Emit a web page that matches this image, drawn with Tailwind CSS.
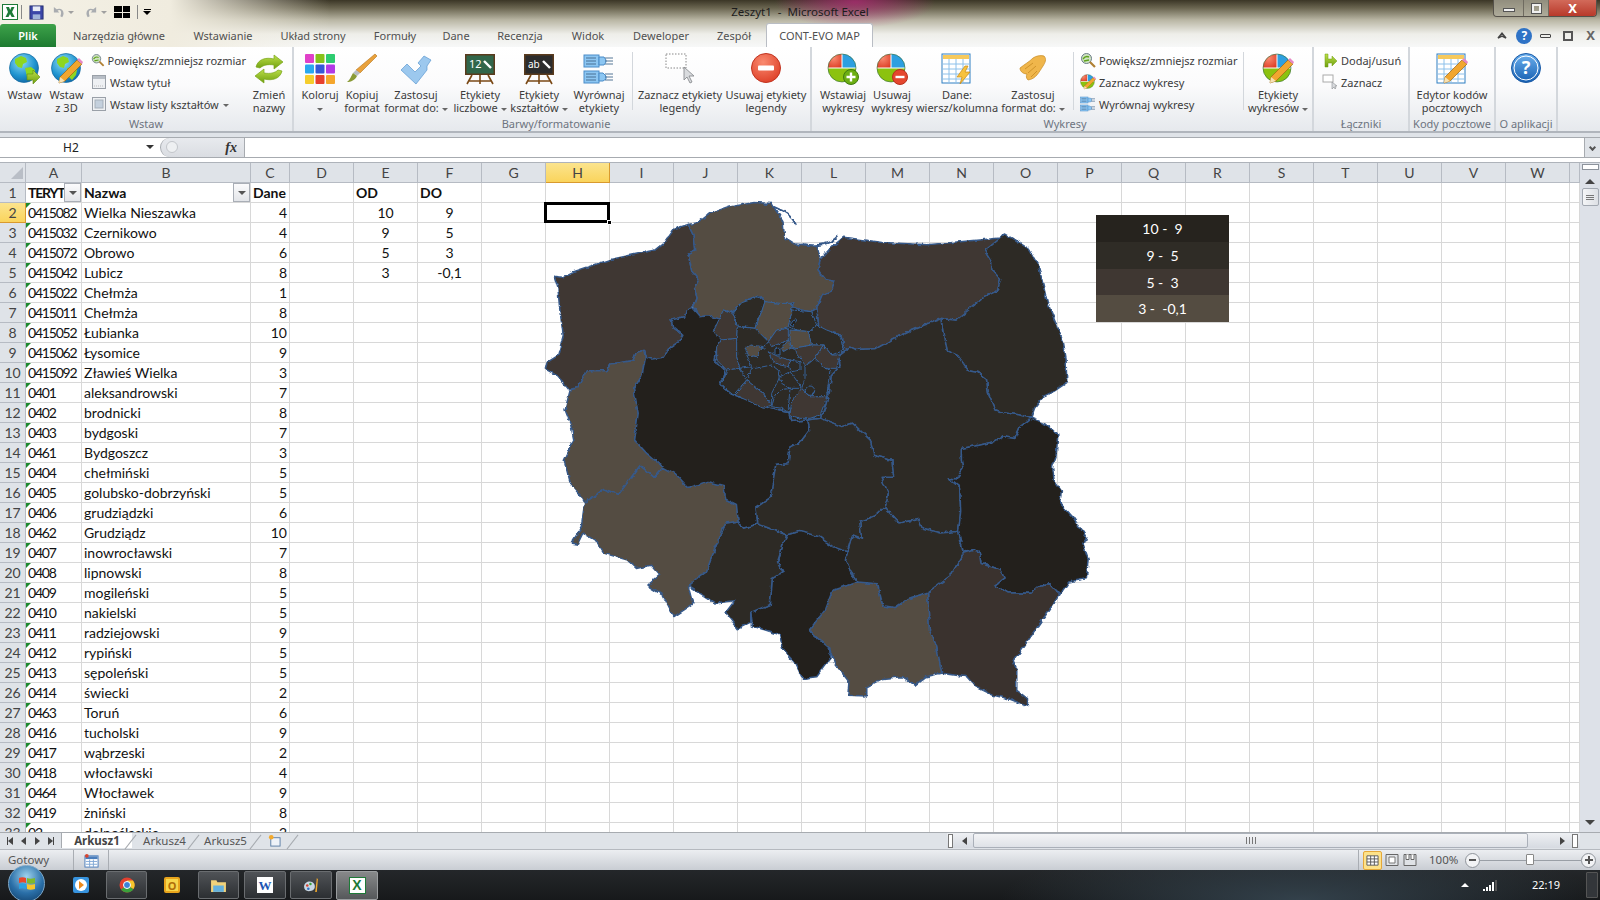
<!DOCTYPE html>
<html lang="pl">
<head>
    <meta charset="UTF-8">
    <title>Zeszyt1 - Microsoft Excel</title>
    <script src="https://cdn.jsdelivr.net/npm/@tailwindcss/browser@4"></script>
</head>
<body class="m-0 overflow-hidden bg-[#dfe3e8]">
<div class="relative flex h-[900px] w-[1600px] flex-col overflow-hidden font-['Noto_Sans',sans-serif] text-[11px] text-[#3c3c3c]">

    <!-- shared icon parts -->
    <svg class="absolute size-0" aria-hidden="true">
        <defs>
            <radialGradient id="gBlue" cx="0.4" cy="0.3" r="0.8"><stop offset="0" stop-color="#8fdcf5"/><stop offset="0.6" stop-color="#1f93cf"/><stop offset="1" stop-color="#0d5e9c"/></radialGradient>
            <radialGradient id="gRed" cx="0.4" cy="0.3" r="0.8"><stop offset="0" stop-color="#f98a70"/><stop offset="1" stop-color="#dc3a22"/></radialGradient>
            <linearGradient id="gArrow" x1="0" y1="0" x2="0" y2="1"><stop offset="0" stop-color="#bde04a"/><stop offset="1" stop-color="#6f9f0f"/></linearGradient>
            <linearGradient id="gHelp" x1="0" y1="0" x2="0" y2="1"><stop offset="0" stop-color="#6cb0ee"/><stop offset="1" stop-color="#165fb1"/></linearGradient>
            <symbol id="globe" viewBox="0 0 32 32"><circle cx="15" cy="15" r="14.5" fill="url(#gBlue)" stroke="#11689f" stroke-width="0.7"/><path d="M6 6l6-3 5 2 1 4-4 2-1 4-4-1-3-4zM16 15l6-1 4 3-1 5-4 5-3-3z" fill="#8ed620"/></symbol>
            <symbol id="pencil" viewBox="0 0 32 32"><path d="M8 30l1-6L26 7l5 4-17 17z" fill="#f1a62f" stroke="#9c6512" stroke-width="0.7"/><path d="M26 7l2-2 4 4-1 2z" fill="#e887c4"/><path d="M8 30l1-6 5 4z" fill="#f6e2b5"/></symbol>
            <symbol id="pie" viewBox="0 0 32 32"><path d="M15 15V1A14 14 0 0 0 1 15z" fill="url(#gRed)"/><path d="M15 15V1A14 14 0 0 1 29 15z" fill="#2d9fe0"/><path d="M1 15h28A14 14 0 0 1 1 15z" fill="#8cc20f"/><path d="M15 1v14M1 15h28" stroke="#fff" stroke-width="1"/><circle cx="15" cy="15" r="14" fill="none" stroke="#2b6a35" stroke-width="0.6"/></symbol>
            <symbol id="table" viewBox="0 0 32 32"><rect x="1" y="1" width="28" height="29" fill="#fff" stroke="#2e7fc2" stroke-width="1"/><rect x="2" y="2" width="26" height="4" fill="#f6c95c"/><path d="M2 11h26M2 16h26M2 21h26M2 26h26M8 6v24M15 6v24M22 6v24" stroke="#8cc0ea" stroke-width="1"/></symbol>
            <symbol id="zoomglass" viewBox="0 0 16 16"><circle cx="6.5" cy="6.5" r="5" fill="#cfe3c0" stroke="#6c7c89"/><path d="M3 7c2-3 4-3 6-2M4 9l5-1" stroke="#5ea31d" stroke-width="1.4" fill="none"/><path d="M10 10l5 5" stroke="#b08034" stroke-width="2.2"/></symbol>
            <symbol id="align" viewBox="0 0 32 32"><rect x="1" y="2" width="15" height="12" fill="#8cc6f2" stroke="#4a8cc8"/><path d="M16 4h5l2 3v2l-2 3h-5z" fill="#8cc6f2" stroke="#4a8cc8"/><rect x="1" y="18" width="15" height="12" fill="#8cc6f2" stroke="#4a8cc8"/><path d="M16 20h4l3 3v3l-3 2h-4z" fill="#8cc6f2" stroke="#4a8cc8"/><path d="M3 5h10M3 8h10M3 11h10M3 21h10M3 24h10M3 27h10M22 5h8M22 8h8M22 11h8M22 21h8M22 24h8M22 27h8" stroke="#42688a" stroke-width="0.9"/></symbol>
            <symbol id="easel" viewBox="0 0 32 32"><path d="M8 22L3 31M24 22l5 9M16 22v9M5 28h22" stroke="#7b4a17" stroke-width="1.6"/><rect x="1" y="1" width="30" height="21" fill="#5a3b1d"/></symbol>
        </defs>
    </svg>

    <!-- title bar and tabs share one glass background -->
    <div class="relative h-[47px] shrink-0 bg-[linear-gradient(90deg,#f4f1e6_0px,#f0ecdf_170px,rgba(240,236,223,0)_330px),radial-gradient(ellipse_80px_26px_at_855px_2px,rgba(180,40,120,0.75),rgba(180,40,120,0)),linear-gradient(180deg,#3b3626_0px,#6a6550_8px,#b9b6a4_20px,#eeeee9_34px,#f7f8f8_47px)]">
        <div class="flex h-[24px] items-center">
            <svg class="ml-[2px] size-[16px]" viewBox="0 0 16 16"><rect x="0.5" y="0.5" width="15" height="15" fill="#fff" stroke="#1d7a37"/><path d="M4 3h3l1.200 3L9.500 3h3L10 8l2.700 5h-3L8 10l-1.500 3h-3L6 8z" fill="#1d7a37"/></svg>
            <span class="ml-[3px] h-[14px] w-px bg-[#888]"></span>
            <svg class="ml-[7px] size-[15px]" viewBox="0 0 16 16"><rect x="1" y="1" width="14" height="14" fill="#3b46a8" stroke="#26306f"/><rect x="4" y="1.500" width="8" height="5" fill="#e8ecf5"/><rect x="4" y="10" width="8" height="5" fill="#9fb3d9"/></svg>
            <svg class="ml-[8px] size-[13px]" viewBox="0 0 14 14"><path d="M2 1v6h6L6 5c3-2 5 1 3 6l2 1c4-6-1-11-6-8.500L2 1z" fill="#a9acb0"/></svg>
            <span class="ml-[3px] border-x-[3px] border-t-[3px] border-x-transparent border-t-[#a0a0a0]"></span>
            <svg class="ml-[11px] size-[13px]" viewBox="0 0 14 14"><path d="M12 1v6H6l2-2c-3-2-5 1-3 6l-2 1C-1 6 4 1 9 3.500L12 1z" fill="#a9acb0"/></svg>
            <span class="ml-[3px] border-x-[3px] border-t-[3px] border-x-transparent border-t-[#a0a0a0]"></span>
            <span class="ml-[7px] grid h-[12px] w-[16px] grid-cols-2 gap-[1px]"><i class="bg-black"></i><i class="bg-black"></i><i class="bg-black"></i><i class="bg-black"></i></span>
            <span class="ml-[7px] h-[14px] w-px bg-[#888]"></span>
            <span class="ml-[5px] flex flex-col items-center gap-[1px]"><i class="h-px w-[7px] bg-black"></i><i class="border-x-[4px] border-t-[4px] border-x-transparent border-t-black"></i></span>
            <span class="absolute left-[0px] top-[4px] w-[1600px] text-center text-[11.5px] leading-[16px] text-[#1c1c1c]">Zeszyt1&nbsp; -&nbsp; Microsoft Excel</span>
            <!-- window buttons -->
            <div class="absolute right-[3px] top-0 flex h-[17px] overflow-hidden rounded-b-[4px] border border-t-0 border-[#55514a]">
                <span class="flex w-[30px] items-center justify-center border-r border-[#6f6b60] bg-[#b7b3a4]/70"><i class="mt-[3px] h-[4px] w-[12px] border border-[#555] bg-[#f0f0f0]"></i></span>
                <span class="flex w-[25px] items-center justify-center border-r border-[#6f6b60] bg-[#b7b3a4]/70"><i class="size-[9px] border-2 border-[#f0f0f0] outline outline-[#555]"></i></span>
                <span class="flex w-[47px] items-center justify-center bg-[linear-gradient(180deg,#d26a5a,#b8392a)] text-[13px] font-bold leading-none text-white">X</span>
            </div>
        </div>
        <div class="flex h-[23px] items-end text-[#505050] [&>span]:pt-[2px]">
            <span class="flex h-[23px] w-[56px] items-center justify-center rounded-t-[3px] bg-[linear-gradient(180deg,#3da24a,#1d7a30)] font-semibold text-[#fff]">Plik</span>
            <span class="flex h-[23px] w-[126px] items-center justify-center">Narzędzia główne</span>
            <span class="flex h-[23px] w-[82px] items-center justify-center">Wstawianie</span>
            <span class="flex h-[23px] w-[98px] items-center justify-center">Układ strony</span>
            <span class="flex h-[23px] w-[66px] items-center justify-center">Formuły</span>
            <span class="flex h-[23px] w-[56px] items-center justify-center">Dane</span>
            <span class="flex h-[23px] w-[72px] items-center justify-center">Recenzja</span>
            <span class="flex h-[23px] w-[64px] items-center justify-center">Widok</span>
            <span class="flex h-[23px] w-[82px] items-center justify-center">Deweloper</span>
            <span class="flex h-[23px] w-[64px] items-center justify-center">Zespół</span>
            <span class="flex h-[24px] w-[107px] items-center justify-center rounded-t-[3px] border border-b-0 border-[#b9bdc4] bg-white">CONT-EVO MAP</span>
            <div class="ml-auto flex h-[23px] items-center">
                <svg class="mr-[9px] size-[10px]" viewBox="0 0 10 10"><path d="M1 7l4-5 4 5-4-2z" fill="none" stroke="#444" stroke-width="1.400"/></svg>
                <span class="mr-[8px] flex size-[16px] items-center justify-center rounded-full bg-[#2f73c6] text-[12px] font-bold leading-none text-white">?</span>
                <i class="mr-[12px] h-[4px] w-[11px] rounded-[1px] border border-[#444]"></i>
                <i class="mr-[13px] size-[10px] border-2 border-[#555]"></i>
                <span class="mr-[5px] text-[13px] font-bold leading-none text-[#666]">X</span>
            </div>
        </div>
    </div>

    <!-- ribbon -->
    <div class="flex h-[86px] shrink-0 border-b-2 border-[#b0b5bc] bg-[linear-gradient(180deg,#ffffff_0%,#fbfbfc_45%,#e6e9ed_100%)] leading-[13px]">

        <div class="flex w-[294px] flex-col border-r-2 border-[#d3d7dc]">
            <div class="flex h-[71px] pl-px">
                <div class="flex w-[47px] flex-col items-center">
                    <svg class="mt-[6px] h-[32px] w-[32px]" viewBox="0 0 32 32"><use href="#globe"/><path d="M18 21h6v-4l7 7-7 7v-4h-6z" fill="url(#gArrow)" stroke="#5f8c12" stroke-width="0.6"/></svg>
                    <span class="mt-[3px] text-center">Wstaw</span>
                </div>
                <div class="flex w-[37px] flex-col items-center">
                    <svg class="mt-[6px] h-[32px] w-[32px]" viewBox="0 0 32 32"><use href="#globe"/><use href="#pencil" x="0" y="0"/></svg>
                    <span class="mt-[3px] text-center">Wstaw<br>z 3D</span>
                </div>
                <div class="flex w-[161px] flex-col gap-[6px] whitespace-nowrap pl-[6px] pt-[5px]">
                    <div class="flex h-[16px] items-center gap-[3px]"><svg class="size-[16px]" viewBox="0 0 16 16"><use href="#zoomglass"/></svg><span>Powiększ/zmniejsz rozmiar</span></div>
                    <div class="flex h-[16px] items-center gap-[3px]"><svg class="size-[16px]" viewBox="0 0 16 16"><rect x="1.500" y="1.500" width="13" height="13" fill="#eef0f3" stroke="#9aa0a8"/><rect x="2" y="2" width="12" height="3" fill="#b8bec6"/><path d="M3 12h10" stroke="#bbb" stroke-dasharray="1 1"/></svg><span>Wstaw tytuł</span></div>
                    <div class="flex h-[16px] items-center gap-[3px]"><svg class="size-[16px]" viewBox="0 0 16 16"><rect x="1.500" y="1.500" width="13" height="13" fill="#eef0f3" stroke="#9aa0a8"/><rect x="4" y="4" width="8" height="8" fill="#c4d0dd" stroke="#a5afba"/></svg><span>Wstaw listy kształtów<i class="ml-[4px] inline-block border-x-[3px] border-t-[3px] border-x-transparent border-t-[#666] align-middle"></i></span></div>
                </div>
                <div class="flex w-[46px] flex-col items-center">
                    <svg class="mt-[6px] h-[32px] w-[32px]" viewBox="0 0 32 32"><path d="M3 14c2-8 10-10 18-8V2l9 7-9 7v-4c-6-1-11 0-14 3z" fill="url(#gArrow)" stroke="#78a51a" stroke-width="0.7"/><path d="M29 18c-2 8-10 10-18 8v4l-9-7 9-7v4c6 1 11 0 14-3z" fill="url(#gArrow)" stroke="#78a51a" stroke-width="0.7"/></svg>
                    <span class="mt-[3px] text-center">Zmień<br>nazwy</span>
                </div>
            </div>
            <div class="text-center leading-[14px] text-[#6d7480]">Wstaw</div>
        </div>

        <div class="flex w-[518px] flex-col border-r-2 border-[#d3d7dc]">
            <div class="flex h-[71px] pl-[4px]">
                <div class="flex w-[44px] flex-col items-center">
                    <svg class="mt-[6px] h-[32px] w-[32px]" viewBox="0 0 32 32"><rect x="1" y="1" width="9" height="9" rx="1" fill="#e040c8"/><rect x="11.500" y="1" width="9" height="9" rx="1" fill="#86c21a"/><rect x="22" y="1" width="9" height="9" rx="1" fill="#2dcc70"/><rect x="1" y="11.500" width="9" height="9" rx="1" fill="#29a8ef"/><rect x="11.500" y="11.500" width="9" height="9" rx="1" fill="#3558d8"/><rect x="22" y="11.500" width="9" height="9" rx="1" fill="#b23ae6"/><rect x="1" y="22" width="9" height="9" rx="1" fill="#f5cd2c"/><rect x="11.500" y="22" width="9" height="9" rx="1" fill="#e8402e"/><rect x="22" y="22" width="9" height="9" rx="1" fill="#f5a62c"/></svg>
                    <span class="mt-[3px] text-center">Koloruj<br><i class="inline-block border-x-[3px] border-t-[3px] border-x-transparent border-t-[#666] align-middle"></i></span>
                </div>
                <div class="flex w-[40px] flex-col items-center">
                    <svg class="mt-[6px] h-[32px] w-[32px]" viewBox="0 0 32 32"><path d="M29 1l2 2-17 17-4-3z" fill="#e9a13b" stroke="#b3741c" stroke-width="0.6"/><path d="M10 17l4 3-3 3-4-3z" fill="#b7bcc2"/><path d="M7 20l4 3c-2 4-6 6-10 6 3-2 4-6 6-9z" fill="#8a9a36"/></svg>
                    <span class="mt-[3px] text-center">Kopiuj<br>format</span>
                </div>
                <div class="flex w-[68px] flex-col items-center">
                    <svg class="mt-[6px] h-[32px] w-[32px]" viewBox="0 0 32 32"><path d="M1 17l6-6 8 8L21 13l-3-3 6-7 7 4-4 6 0 4-11 14z" fill="#9cc8ee" stroke="#5d9ad1" stroke-width="0.7"/></svg>
                    <span class="mt-[3px] whitespace-nowrap text-center">Zastosuj<br>format do:<i class="ml-[3px] inline-block border-x-[3px] border-t-[3px] border-x-transparent border-t-[#666] align-middle"></i></span>
                </div>
                <div class="flex w-[60px] flex-col items-center">
                    <svg class="mt-[6px] h-[32px] w-[32px]" viewBox="0 0 32 32"><use href="#easel"/><rect x="2.500" y="2.500" width="27" height="18" fill="#31664a"/><text x="5" y="15" font-size="11" font-family="Noto Sans, sans-serif" fill="#fff">12</text><path d="M20 8l7 7" stroke="#fff" stroke-width="2.400"/></svg>
                    <span class="mt-[3px] whitespace-nowrap text-center">Etykiety<br>liczbowe<i class="ml-[3px] inline-block border-x-[3px] border-t-[3px] border-x-transparent border-t-[#666] align-middle"></i></span>
                </div>
                <div class="flex w-[58px] flex-col items-center">
                    <svg class="mt-[6px] h-[32px] w-[32px]" viewBox="0 0 32 32"><use href="#easel"/><rect x="2.500" y="2.500" width="27" height="18" fill="#2c2c2c"/><text x="5" y="15" font-size="10" font-family="Noto Sans, sans-serif" fill="#fff">ab</text><path d="M20 8l7 7" stroke="#fff" stroke-width="2.400"/></svg>
                    <span class="mt-[3px] whitespace-nowrap text-center">Etykiety<br>kształtów<i class="ml-[3px] inline-block border-x-[3px] border-t-[3px] border-x-transparent border-t-[#666] align-middle"></i></span>
                </div>
                <div class="flex w-[62px] flex-col items-center">
                    <svg class="mt-[6px] h-[32px] w-[32px]" viewBox="0 0 32 32"><use href="#align"/></svg>
                    <span class="mt-[3px] text-center">Wyrównaj<br>etykiety</span>
                </div>
                <div class="mx-[2px] mt-[5px] h-[58px] w-px bg-[#d3d7dc]"></div>
                <div class="flex w-[90px] flex-col items-center">
                    <svg class="mt-[6px] h-[32px] w-[32px]" viewBox="0 0 32 32"><rect x="2" y="1" width="20" height="14" fill="#fff" stroke="#888" stroke-dasharray="1.500 1.500"/><path d="M20 14v13l3-3 3 6 2-1-3-6h5z" fill="#d9dbde" stroke="#8a8d91" stroke-width="0.9"/></svg>
                    <span class="mt-[3px] whitespace-nowrap text-center">Zaznacz etykiety<br>legendy</span>
                </div>
                <div class="flex w-[82px] flex-col items-center">
                    <svg class="mt-[6px] h-[32px] w-[32px]" viewBox="0 0 32 32"><circle cx="16" cy="15" r="14.500" fill="url(#gRed)" stroke="#c13421"/><rect x="8" y="12.500" width="16" height="5" rx="1" fill="#fff"/></svg>
                    <span class="mt-[3px] whitespace-nowrap text-center">Usuwaj etykiety<br>legendy</span>
                </div>
            </div>
            <div class="pl-[8px] text-center leading-[14px] text-[#6d7480]">Barwy/formatowanie</div>
        </div>

        <div class="flex w-[502px] flex-col border-r-2 border-[#d3d7dc]">
            <div class="flex h-[71px] pl-[4px]">
                <div class="flex w-[54px] flex-col items-center">
                    <svg class="mt-[6px] h-[32px] w-[32px]" viewBox="0 0 32 32"><use href="#pie"/><circle cx="24" cy="24" r="7.500" fill="#6cae12" stroke="#3f7a10"/><path d="M24 19.500v9M19.500 24h9" stroke="#fff" stroke-width="2.400"/></svg>
                    <span class="mt-[3px] text-center">Wstawiaj<br>wykresy</span>
                </div>
                <div class="flex w-[44px] flex-col items-center">
                    <svg class="mt-[6px] h-[32px] w-[32px]" viewBox="0 0 32 32"><use href="#pie"/><circle cx="24" cy="24" r="7.500" fill="#e5472f" stroke="#b7301d"/><path d="M19.500 24h9" stroke="#fff" stroke-width="2.400"/></svg>
                    <span class="mt-[3px] text-center">Usuwaj<br>wykresy</span>
                </div>
                <div class="flex w-[86px] flex-col items-center">
                    <svg class="mt-[6px] h-[32px] w-[32px]" viewBox="0 0 32 32"><use href="#table"/><path d="M24 13l-8 11h5l-2 7 10-12h-5l3-6z" fill="#f7c23e" stroke="#c98a13" stroke-width="0.7"/></svg>
                    <span class="mt-[3px] whitespace-nowrap text-center">Dane:<br>wiersz/kolumna</span>
                </div>
                <div class="flex w-[66px] flex-col items-center">
                    <svg class="mt-[6px] h-[32px] w-[32px]" viewBox="0 0 32 32"><path d="M3 15c5-4 9-6 13-10 3-2 7-3 11-2 3 3 1 7-1 10-4 6-7 13-15 14-2-2-2-4-1-6-3 0-7-2-7-6z" fill="#f0b64b" stroke="#c68a22" stroke-width="0.7"/><path d="M8 16l8-6M11 20l8-7M14 24l6-6" stroke="#c68a22" stroke-width="0.8"/></svg>
                    <span class="mt-[3px] whitespace-nowrap text-center">Zastosuj<br>format do:<i class="ml-[3px] inline-block border-x-[3px] border-t-[3px] border-x-transparent border-t-[#666] align-middle"></i></span>
                </div>
                <div class="ml-[7px] mr-[6px] mt-[5px] h-[58px] w-px bg-[#d3d7dc]"></div>
                <div class="flex w-[163px] flex-col gap-[6px] whitespace-nowrap pt-[5px]">
                    <div class="flex h-[16px] items-center gap-[3px]"><svg class="size-[16px]" viewBox="0 0 16 16"><use href="#zoomglass"/></svg><span>Powiększ/zmniejsz rozmiar</span></div>
                    <div class="flex h-[16px] items-center gap-[3px]"><svg class="size-[16px]" viewBox="0 0 32 32"><use href="#pie"/><use href="#pencil"/></svg><span>Zaznacz wykresy</span></div>
                    <div class="flex h-[16px] items-center gap-[3px]"><svg class="size-[16px]" viewBox="0 0 32 32"><use href="#align"/></svg><span>Wyrównaj wykresy</span></div>
                </div>
                <div class="mt-[5px] h-[58px] w-px bg-[#d3d7dc]"></div>
                <div class="flex w-[68px] flex-col items-center">
                    <svg class="mt-[6px] h-[32px] w-[32px]" viewBox="0 0 32 32"><use href="#pie"/><use href="#pencil"/></svg>
                    <span class="mt-[3px] whitespace-nowrap text-center">Etykiety<br>wykresów<i class="ml-[3px] inline-block border-x-[3px] border-t-[3px] border-x-transparent border-t-[#666] align-middle"></i></span>
                </div>
            </div>
            <div class="pl-[6px] text-center leading-[14px] text-[#6d7480]">Wykresy</div>
        </div>

        <div class="flex w-[96px] flex-col border-r-2 border-[#d3d7dc]">
            <div class="flex h-[71px] flex-col gap-[6px] pl-[8px] pt-[5px]">
                <div class="flex h-[16px] items-center gap-[3px]"><svg class="size-[16px]" viewBox="0 0 16 16"><path d="M3 2h3v5h4V4l5 5-5 5v-3H6v4H3z" fill="url(#gArrow)" stroke="#6f9f0f" stroke-width="0.500"/></svg><span>Dodaj/usuń</span></div>
                <div class="flex h-[16px] items-center gap-[3px]"><svg class="size-[16px]" viewBox="0 0 16 16"><rect x="1" y="1" width="10" height="7" fill="#fff" stroke="#aaa"/><path d="M10 8v7l2-2 1 2 1-1-1-2h2z" fill="#d9dbde" stroke="#8a8d91" stroke-width="0.600"/></svg><span>Zaznacz</span></div>
            </div>
            <div class="text-center leading-[14px] text-[#6d7480]">Łączniki</div>
        </div>

        <div class="flex w-[86px] flex-col border-r-2 border-[#d3d7dc]">
            <div class="flex h-[71px] flex-col items-center">
                <svg class="mt-[6px] h-[32px] w-[32px]" viewBox="0 0 32 32"><use href="#table"/><use href="#pencil"/></svg>
                <span class="mt-[3px] whitespace-nowrap text-center">Edytor kodów<br>pocztowych</span>
            </div>
            <div class="whitespace-nowrap text-center leading-[14px] text-[#6d7480]">Kody pocztowe</div>
        </div>

        <div class="flex w-[62px] flex-col border-r-2 border-[#d3d7dc]">
            <div class="flex h-[71px] flex-col items-center">
                <svg class="mt-[6px] h-[32px] w-[32px]" viewBox="0 0 32 32"><circle cx="16" cy="15" r="14.500" fill="url(#gHelp)" stroke="#1a5aa6"/><circle cx="16" cy="15" r="12" fill="none" stroke="#fff" stroke-width="1"/><text x="16" y="21" font-size="18" font-weight="700" font-family="Noto Sans, sans-serif" fill="#fff" text-anchor="middle">?</text></svg>
            </div>
            <div class="whitespace-nowrap text-center leading-[14px] text-[#6d7480]">O aplikacji</div>
        </div>
    </div>

    <!-- formula bar -->
    <div class="mt-[4px] flex h-[21px] shrink-0 items-stretch border-y border-[#a7abb0] bg-white text-[12px] text-[#222]">
        <div class="relative flex w-[160px] items-center justify-center pr-[18px] pt-px">H2<i class="absolute right-[6px] top-[7px] border-x-[4px] border-t-[4px] border-x-transparent border-t-[#333]"></i></div>
        <div class="relative flex w-[85px] items-center justify-end rounded-l-[10px] border-l border-r border-[#a7abb0] bg-[linear-gradient(180deg,#e8eaee,#dadde2)] pr-[7px]"><span class="absolute left-[5px] top-[3px] size-[12px] rounded-full border border-[#c3c6cb] bg-[#eef0f2]"></span><span class="font-['Liberation_Serif',serif] text-[14px] font-bold italic leading-none text-[#333]">fx</span></div>
        <div class="flex-1"></div>
        <div class="flex w-[16px] items-center justify-center border-l border-[#a7abb0] bg-[#dfe3e8]"><i class="size-[5px] rotate-45 border-b-2 border-r-2 border-[#555]"></i></div>
    </div>
    <div class="h-[5px] shrink-0 border-b border-[#aeb3ba] bg-white"></div>

    <!-- sheet -->
    <div class="flex h-[669px] shrink-0">
        <div id="sheet" class="relative w-[1580px] overflow-hidden bg-white font-['Lato',sans-serif] text-[14px] text-[#111]">
            <div id="cells"></div>

            <!-- selection of H2 -->
            <div class="absolute left-[544px] top-[39px] h-[21px] w-[66px] border-[3px] border-black"></div>
            <div class="absolute left-[607px] top-[57px] size-[5px] border border-white bg-black"></div>

            <!-- map -->
            <svg class="absolute left-[540px] top-[27px] h-[530px] w-[560px]" viewBox="0 0 1568 1568" preserveAspectRatio="none">
                <defs>
                    <filter id="rough" filterUnits="userSpaceOnUse" x="0" y="0" width="1568" height="1568" color-interpolation-filters="sRGB">
                        <feTurbulence type="fractalNoise" baseFrequency="0.05" numOctaves="3" seed="4"/>
                        <feDisplacementMap in="SourceGraphic" scale="13" xChannelSelector="R" yChannelSelector="G"/>
                    </filter>
                </defs>
                <g filter="url(#rough)" stroke="#36598a" stroke-width="1.500" stroke-linejoin="round">
                    <polygon vector-effect="non-scaling-stroke" fill="#3f3733" points="40,255 62,258 90,243 200,205 325,177 345,160 375,115 415,102 432,140 436,180 415,190 425,240 445,265 432,290 440,320 430,345 410,355 405,375 367,385 372,405 400,430 390,448 360,470 345,495 315,500 295,495 290,475 270,480 260,505 195,515 185,535 130,535 105,585 80,590 50,550 15,530 20,510 50,490 65,430 55,350 50,290"/>
                    <polygon vector-effect="non-scaling-stroke" fill="#544c42" points="415,102 445,95 475,70 530,50 600,37 650,40 660,60 680,90 685,140 715,160 775,165 785,205 778,235 800,265 825,270 815,300 790,310 775,350 762,358 710,350 710,335 675,340 632,332 628,320 605,315 580,325 555,345 535,365 515,355 505,382 470,372 450,375 432,345 440,320 432,290 445,265 425,240 415,190 436,180 432,140"/>
                    <polygon vector-effect="non-scaling-stroke" fill="#3f3733" points="785,205 815,170 850,140 960,155 1085,162 1290,142 1245,180 1265,215 1265,235 1290,265 1280,300 1240,320 1200,355 1165,385 1125,380 1075,400 1030,420 990,440 940,470 885,472 870,465 853,475 845,430 810,420 780,405 775,350 790,310 815,300 825,270 800,265 778,235"/>
                    <polygon vector-effect="non-scaling-stroke" fill="#2d2a25" points="1290,142 1300,130 1325,145 1370,175 1395,220 1420,330 1465,450 1473,500 1475,570 1440,595 1410,610 1385,645 1375,675 1340,665 1300,660 1275,650 1255,600 1250,560 1225,540 1200,535 1170,490 1140,475 1132,430 1125,380 1165,385 1200,355 1240,320 1280,300 1290,265 1265,235 1265,215 1245,180"/>
                    <polygon vector-effect="non-scaling-stroke" fill="#2d2a25" points="1125,380 1132,430 1140,475 1170,490 1200,535 1225,540 1250,560 1255,600 1275,650 1300,660 1340,665 1375,675 1345,700 1330,735 1295,730 1270,745 1230,755 1180,765 1180,800 1185,825 1165,855 1143,852 1175,880 1178,950 1172,1010 1120,1015 1070,1000 1060,975 1005,985 965,940 975,900 955,850 990,850 985,800 935,785 925,740 875,690 845,700 785,675 800,635 810,600 815,550 840,520 835,490 853,475 870,465 885,472 940,470 990,440 1030,420 1075,400"/>
                    <polygon vector-effect="non-scaling-stroke" fill="#23201c" points="1375,675 1420,695 1450,725 1445,790 1435,820 1440,860 1460,890 1455,925 1490,965 1535,1035 1520,1045 1535,1090 1530,1150 1480,1160 1455,1198 1425,1165 1400,1170 1375,1193 1310,1192 1275,1170 1300,1150 1290,1125 1235,1105 1230,1070 1215,1065 1185,1075 1172,1010 1178,950 1175,880 1143,852 1165,855 1185,825 1180,800 1180,765 1230,755 1270,745 1295,730 1330,735 1345,700"/>
                    <polygon vector-effect="non-scaling-stroke" fill="#3a322e" points="1185,1075 1215,1065 1230,1070 1235,1105 1290,1125 1300,1150 1275,1170 1310,1192 1375,1193 1400,1170 1425,1165 1455,1198 1395,1290 1325,1395 1335,1420 1335,1480 1365,1505 1365,1528 1310,1505 1270,1495 1220,1470 1195,1440 1125,1430 1110,1350 1090,1300 1085,1190 1150,1140"/>
                    <polygon vector-effect="non-scaling-stroke" fill="#544c42" points="1085,1190 1090,1300 1110,1350 1125,1430 1080,1440 1050,1465 1015,1440 960,1445 915,1470 915,1497 862,1495 865,1455 825,1400 810,1355 770,1320 755,1300 800,1240 820,1185 890,1160 945,1165 960,1230 995,1235 1030,1210"/>
                    <polygon vector-effect="non-scaling-stroke" fill="#2d2a25" points="1172,1010 1185,1075 1150,1140 1085,1190 1030,1210 995,1235 960,1230 945,1165 890,1160 870,1130 855,1095 875,1020 900,1030 895,980 945,960 965,940 1005,985 1060,975 1070,1000 1120,1015"/>
                    <polygon vector-effect="non-scaling-stroke" fill="#23201c" points="690,1020 730,1010 780,1025 820,1055 860,1070 855,1095 870,1130 890,1160 820,1185 800,1240 755,1300 770,1320 810,1355 815,1385 800,1405 775,1440 735,1445 715,1400 680,1360 670,1315 595,1290 590,1250 645,1225 650,1150 680,1130 665,1100"/>
                    <polygon vector-effect="non-scaling-stroke" fill="#2d2a25" points="520,985 555,980 570,1000 610,988 690,1020 665,1100 680,1130 650,1150 645,1225 590,1250 590,1280 555,1298 520,1250 545,1215 490,1222 415,1172 440,1150 465,1130 490,1060"/>
                    <polygon vector-effect="non-scaling-stroke" fill="#544c42" points="125,925 180,885 220,900 280,815 320,850 345,820 380,840 415,880 470,862 515,875 520,915 550,930 555,980 520,985 490,1060 465,1130 440,1150 415,1172 428,1225 375,1262 345,1200 300,1170 335,1140 310,1110 270,1120 245,1095 180,1075 160,1040 120,1015 105,1048 88,1045 115,1000"/>
                    <polygon vector-effect="non-scaling-stroke" fill="#544c42" points="105,585 130,535 185,535 195,515 260,505 270,480 290,475 295,495 285,550 262,590 275,660 265,740 300,780 345,820 320,850 280,815 220,900 180,885 125,925 118,910 85,870 68,800 95,740 85,690 70,650 85,590"/>
                    <polygon vector-effect="non-scaling-stroke" fill="#23201c" points="425,345 450,375 470,372 505,382 490,415 510,440 495,470 490,510 520,530 505,575 540,605 600,625 640,645 700,660 705,685 750,680 755,710 730,745 700,760 695,810 660,815 645,910 605,940 610,988 570,1000 555,980 550,930 520,915 515,875 470,862 415,880 380,840 345,820 300,780 265,740 275,660 262,590 285,550 295,495 315,500 345,495 360,470 390,448 400,430 372,405 367,385 405,375 410,355"/>
                    <polygon vector-effect="non-scaling-stroke" fill="#2d2a25" points="750,680 785,675 845,700 875,690 925,740 935,785 985,800 990,850 955,850 975,900 965,940 945,960 895,980 900,1030 875,1020 860,1070 820,1055 780,1025 730,1010 690,1020 610,988 605,940 645,910 660,815 695,810 700,760 730,745 755,710"/>
                    <polygon vector-effect="non-scaling-stroke" fill="#2d2a25" points="505,382 515,355 535,365 555,345 580,325 605,315 628,320 632,332 675,340 710,335 710,350 762,358 775,350 780,405 810,420 845,430 853,475 835,490 840,520 815,550 810,600 800,635 785,675 750,680 705,685 700,660 640,645 600,625 540,605 505,575 520,530 490,510 495,470 510,440 490,415"/>
                    <path vector-effect="non-scaling-stroke" fill="none" d="M655 50C680 60 705 75 717 103M735 160C775 170 815 160 835 135" stroke-width="2"/>
                </g>
            </svg>

            <!-- counties of the region -->
            <svg class="absolute left-[700px] top-[117px] h-[150px] w-[180px]" viewBox="0 0 540 450">
                <defs>
                    <filter id="rough2" filterUnits="userSpaceOnUse" x="0" y="0" width="540" height="450" color-interpolation-filters="sRGB">
                        <feTurbulence type="fractalNoise" baseFrequency="0.09" numOctaves="2" seed="9"/>
                        <feDisplacementMap in="SourceGraphic" scale="10" xChannelSelector="R" yChannelSelector="G"/>
                    </filter>
                </defs>
                <g filter="url(#rough2)" stroke="#36629a" stroke-width="3" stroke-linejoin="round">
                    <polygon fill="#2d2a25" points="100,100 125,68 150,60 172,48 195,65 185,95 170,125 165,145 130,140 112,140"/>
                    <polygon fill="#544c42" points="195,65 240,70 275,70 275,100 265,140 230,150 205,185 165,145 185,95"/>
                    <polygon fill="#2d2a25" points="275,90 335,95 350,135 325,155 290,150 265,140 275,100"/>
                    <polygon fill="#3f3733" points="40,155 70,90 100,100 112,140 110,175 65,180"/>
                    <polygon fill="#3f3733" points="65,180 110,175 110,230 120,265 80,270 50,240 50,200"/>
                    <polygon fill="#2d2a25" points="112,140 165,145 205,185 190,205 150,200 135,215 145,235 155,260 120,265 110,230 110,175"/>
                    <polygon fill="#544c42" points="135,205 150,195 190,200 170,230 145,225"/>
                    <polygon fill="#3f3733" points="205,185 230,150 265,145 265,180 240,190 215,200"/>
                    <polygon fill="#544c42" points="270,150 330,155 335,195 280,205 270,190"/>
                    <polygon fill="#2d2a25" points="350,135 380,150 420,165 430,210 395,225 370,195 335,195 325,155"/>
                    <polygon fill="#3f3733" points="335,195 370,195 345,235 315,255 280,205"/>
                    <polygon fill="#3f3733" points="370,195 395,225 420,225 410,265 375,265 345,235"/>
                    <polygon fill="#23201c" points="225,205 240,205 240,225 225,225"/>
                    <polygon fill="#544c42" points="245,205 265,180 275,200 250,215"/>
                    <polygon fill="#2d2a25" points="80,270 120,265 140,300 100,345 75,325 60,310 75,290"/>
                    <polygon fill="#3f3733" points="120,330 140,300 165,320 190,340 215,375 190,385 150,365 105,345"/>
                    <polygon fill="#2d2a25" points="165,265 215,255 240,275 235,300 215,340 215,375 190,340 165,320 140,300 155,265"/>
                    <polygon fill="#2d2a25" points="240,330 270,325 265,385 270,400 245,385 215,380 225,345"/>
                    <polygon fill="#3f3733" points="305,325 330,350 380,350 370,380 360,405 330,415 300,415 270,405 275,365"/>
                    <polygon fill="#2d2a25" points="315,260 345,235 375,265 390,270 385,310 380,350 330,350 305,325 315,295"/>
                    <polygon fill="#2d2a25" points="240,290 270,275 300,315 305,325 270,325 245,310"/>
                    <polygon fill="#2d2a25" points="270,240 300,245 300,270 275,275 265,260"/>
                    <polygon fill="#3f3733" points="205,215 235,230 270,240 265,260 240,255 215,240"/>
                    <polygon fill="#23201c" points="270,135 285,115 290,120 280,140"/>
                    <circle cx="330" cy="332" r="14" fill="none"/>
                </g>
            </svg>

            <!-- legend -->
            <div class="absolute left-[1096px] top-[52px] flex h-[107px] w-[133px] flex-col text-center leading-[28px] text-white">
                <div class="h-[27px] whitespace-pre bg-[#26231e]">10 -  9</div>
                <div class="h-[27px] whitespace-pre bg-[#2f2c26]">9 -  5</div>
                <div class="h-[26px] whitespace-pre bg-[#3f3732]">5 -  3</div>
                <div class="h-[27px] whitespace-pre bg-[#544c41]">3 -  -0,1</div>
            </div>
        </div>

        <!-- vertical scrollbar -->
        <div class="flex w-[20px] flex-col items-center bg-[#dde1e8]">
            <i class="mt-px h-[6px] w-[17px] border border-[#8d939c] bg-white"></i>
            <i class="mt-[9px] border-x-[5px] border-b-[5px] border-x-transparent border-b-[#444]"></i>
            <span class="mt-[4px] flex h-[18px] w-[17px] flex-col items-center justify-center gap-px rounded-[2px] border border-[#a2a8b1] bg-[linear-gradient(90deg,#f4f5f7,#dde0e5)]"><i class="h-px w-[8px] bg-[#777]"></i><i class="h-px w-[8px] bg-[#777]"></i><i class="h-px w-[8px] bg-[#777]"></i></span>
            <i class="mb-[7px] mt-auto border-x-[5px] border-t-[5px] border-x-transparent border-t-[#444]"></i>
        </div>
    </div>

    <!-- sheet tabs -->
    <div class="flex h-[16px] shrink-0 items-stretch border-t border-[#a7abb0] bg-[#dfe3e8] text-[11.5px] leading-[15px] text-[#555]">
        <div class="flex w-[62px] items-center justify-around border-r border-[#a7abb0] px-[3px]">
            <span class="flex items-center"><i class="h-[8px] w-px bg-[#444]"></i><i class="border-y-[4px] border-r-[5px] border-y-transparent border-r-[#444]"></i></span>
            <i class="border-y-[4px] border-r-[5px] border-y-transparent border-r-[#444]"></i>
            <i class="border-y-[4px] border-l-[5px] border-y-transparent border-l-[#444]"></i>
            <span class="flex items-center"><i class="border-y-[4px] border-l-[5px] border-y-transparent border-l-[#444]"></i><i class="h-[8px] w-px bg-[#444]"></i></span>
        </div>
        <span class="w-[70px] bg-white text-center font-bold text-[#444]">Arkusz1</span>
        <i class="mx-[-2px] h-[18px] w-px rotate-[38deg] bg-[#a7abb0]"></i>
        <span class="w-[66px] pl-[5px] text-center">Arkusz4</span>
        <i class="mx-[-2px] h-[18px] w-px rotate-[38deg] bg-[#a7abb0]"></i>
        <span class="w-[65px] pl-[2px] text-center">Arkusz5</span>
        <i class="mx-[-2px] h-[18px] w-px rotate-[38deg] bg-[#a7abb0]"></i>
        <span class="flex w-[40px] items-center justify-center"><svg class="size-[13px]" viewBox="0 0 14 14"><rect x="3" y="4" width="10" height="9" fill="#eef2f8" stroke="#5a7da5"/><circle cx="3.500" cy="3.500" r="2.500" fill="#f2a92c"/></svg></span>
        <i class="mx-[-2px] h-[18px] w-px rotate-[38deg] bg-[#a7abb0]"></i>
        <div class="ml-[656px] flex w-[633px] items-center bg-[linear-gradient(180deg,#eef0f3,#d6dae1)]">
            <i class="ml-[1px] h-[14px] w-[5px] border border-[#777] bg-white"></i>
            <i class="ml-[9px] border-y-[4px] border-r-[5px] border-y-transparent border-r-[#444]"></i>
            <span class="ml-[6px] flex h-[15px] w-[555px] items-center justify-center gap-px rounded-[2px] border border-[#aab0b9] bg-[linear-gradient(180deg,#f3f4f6,#dfe2e7)]"><i class="h-[7px] w-px bg-[#777]"></i><i class="ml-px h-[7px] w-px bg-[#777]"></i><i class="ml-px h-[7px] w-px bg-[#777]"></i><i class="ml-px h-[7px] w-px bg-[#777]"></i></span>
            <i class="ml-[32px] border-y-[4px] border-l-[5px] border-y-transparent border-l-[#444]"></i>
            <i class="ml-[7px] h-[14px] w-[6px] border border-[#777] bg-white"></i>
        </div>
    </div>

    <!-- status bar -->
    <div class="mt-px flex h-[21px] shrink-0 items-center border-t border-[#b5b9bf] bg-[linear-gradient(180deg,#eceef1,#c9cdd3)] text-[11.5px] text-[#555]">
        <span class="w-[73px] pl-[8px]">Gotowy</span>
        <div class="flex h-full w-[36px] items-center justify-center border-x border-[#a9adb3]"><svg class="size-[15px]" viewBox="0 0 16 16"><rect x="1" y="3" width="14" height="12" fill="#fff" stroke="#4a7dbb"/><rect x="1.500" y="3.500" width="13" height="3" fill="#4a7dbb"/><path d="M2 9h12M2 12h12M6 7v8M10 7v8" stroke="#7fa6d4"/><circle cx="3" cy="3" r="2" fill="#d8452f"/></svg></div>
        <div class="ml-[1249px] flex h-full items-center border-l border-[#a9adb3] pl-[4px]">
            <span class="flex h-[19px] w-[19px] items-center justify-center rounded-[2px] border border-[#e5a83a] bg-[#fde28a]"><svg class="size-[13px]" viewBox="0 0 14 14"><path d="M1 2h12v10H1zM1 5.300h12M1 8.600h12M5 2v10M9 2v10" fill="#fff" stroke="#555"/></svg></span>
            <svg class="ml-[3px] size-[14px]" viewBox="0 0 14 14"><path d="M1 1.500h12v11H1z" fill="#dfe2e6" stroke="#666"/><path d="M4 4h6v6H4z" fill="#fff" stroke="#777"/></svg>
            <svg class="ml-[4px] size-[14px]" viewBox="0 0 14 14"><path d="M1 1.500h12v11H1z" fill="#dfe2e6" stroke="#666"/><path d="M3 1.500v5h3v-5M8 1.500v5h3v-5" fill="#fff" stroke="#666"/></svg>
            <span class="ml-[12px] w-[28px] whitespace-nowrap">100%</span>
            <span class="ml-[8px] flex size-[15px] items-center justify-center rounded-full border border-[#8e939a] bg-[#f2f3f5]"><i class="h-[2px] w-[7px] bg-[#555]"></i></span>
            <span class="relative h-px w-[101px] bg-[#9a9fa6]"><i class="absolute left-[46px] top-[-6px] h-[11px] w-[8px] rounded-[1px] border border-[#888] bg-white"></i></span>
            <span class="relative flex size-[15px] items-center justify-center rounded-full border border-[#8e939a] bg-[#f2f3f5]"><i class="h-[2px] w-[8px] bg-[#555]"></i><i class="absolute h-[8px] w-[2px] bg-[#555]"></i></span>
        </div>
    </div>

    <!-- windows taskbar -->
    <div class="relative flex h-[30px] shrink-0 items-center bg-[radial-gradient(ellipse_300px_60px_at_1300px_30px,#33414b,rgba(51,65,75,0)),linear-gradient(180deg,#24272a,#17191b)] text-white">
        <!-- start orb sits over the bar edge -->
        <span class="absolute left-[8px] top-[-5px] flex size-[37px] items-center justify-center rounded-full border border-[#7fa8c8] bg-[radial-gradient(circle_at_50%_30%,#9ed3ee,#2a6fa8_55%,#0e3a63)]">
            <svg class="size-[20px]" viewBox="0 0 20 20"><path d="M2 4c2-1 5-1 7 0v5c-2-1-5-1-7 0z" fill="#e8482c"/><path d="M10 4c2 1 5 1 8 0v5c-3 1-6 1-8 0z" fill="#7fba2c"/><path d="M2 10c2-1 5-1 7 0v5c-2-1-5-1-7 0z" fill="#2ba1e0"/><path d="M10 10c2 1 5 1 8 0v5c-3 1-6 1-8 0z" fill="#f6c62c"/></svg>
        </span>
        <div class="ml-[73px] flex size-[16px] items-center justify-center rounded-[2px] bg-[#3793de]"><span class="flex size-[12px] items-center justify-center rounded-full bg-white"><i class="ml-px border-y-[4px] border-l-[5px] border-y-transparent border-l-[#ee8a1c]"></i></span></div>
        <div class="ml-[17px] flex h-[28px] w-[41px] items-center justify-center rounded-[2px] border border-[#6a6d70] bg-[linear-gradient(180deg,#505357,#2c2f32)]"><svg class="size-[16px]" viewBox="0 0 16 16"><circle cx="8" cy="8" r="7.500" fill="#e2402f"/><path d="M8 8L14.500 12A7.500 7.500 0 0 1 2 12.500z" fill="#3aa13c"/><path d="M8 8l6.500 4A7.500 7.500 0 0 0 14 3.500H8z" fill="#f6c62c"/><circle cx="8" cy="8" r="3.500" fill="#3b82d8" stroke="#fff"/></svg></div>
        <div class="ml-[17px] flex size-[16px] items-center justify-center rounded-[2px] border-2 border-[#e8a41c] bg-[#f7d64c] text-[11px] font-bold leading-none text-[#b06e08]">O</div>
        <div class="ml-[18px] flex h-[28px] w-[41px] items-center justify-center rounded-[2px] border border-[#6a6d70] bg-[linear-gradient(180deg,#505357,#2c2f32)]"><svg class="size-[17px]" viewBox="0 0 16 16"><path d="M1 3h5l1 2h8v9H1z" fill="#f1d27a"/><path d="M3 8h10v6H3z" fill="#64b1dd"/></svg></div>
        <div class="ml-[5px] flex h-[28px] w-[42px] items-center justify-center rounded-[2px] border border-[#6a6d70] bg-[linear-gradient(180deg,#505357,#2c2f32)]"><span class="flex size-[16px] items-center justify-center bg-white font-['Liberation_Serif',serif] text-[13px] font-bold leading-none text-[#1d55b3]">W</span></div>
        <div class="ml-[4px] flex h-[28px] w-[42px] items-center justify-center rounded-[2px] border border-[#6a6d70] bg-[linear-gradient(180deg,#505357,#2c2f32)]"><svg class="size-[17px]" viewBox="0 0 16 16"><path d="M1 9c0-4 5-6 8-4s3 7-1 8-7 0-7-4z" fill="#c9d7e4"/><circle cx="4" cy="8" r="1.200" fill="#d8452f"/><circle cx="7" cy="6.500" r="1.200" fill="#3aa13c"/><circle cx="5" cy="11" r="1.200" fill="#2f73c6"/><path d="M13 1l1 1-1 12h-1.500z" fill="#f2a92c"/></svg></div>
        <div class="ml-[4px] flex h-[29px] w-[42px] items-center justify-center rounded-[2px] border border-[#9a9d9f] bg-[linear-gradient(180deg,#87898a,#55585a)]"><span class="flex size-[17px] items-center justify-center border border-[#1d7a37] bg-white font-['Liberation_Sans',sans-serif] text-[14px] font-bold leading-none text-[#1d7a37]">X</span></div>
        <i class="ml-[1083px] border-x-[4px] border-b-[4px] border-x-transparent border-b-white"></i>
        <span class="ml-[14px] flex h-[11px] items-end gap-px"><i class="h-[2px] w-[2px] bg-white"></i><i class="h-[4px] w-[2px] bg-white"></i><i class="h-[6px] w-[2px] bg-white"></i><i class="h-[9px] w-[2px] bg-white"></i><i class="h-[11px] w-[2px] bg-[#555]"></i></span>
        <span class="ml-[35px] w-[26px] text-[11px]">22:19</span>
        <i class="ml-[28px] h-[26px] w-[12px] rounded-[1px] border border-[#555] bg-[#33363a]"></i>
    </div>
</div>

<script>
    // sheet data: TERYT, Nazwa, Dane
    const data = [
        ['0415082','Wielka Nieszawka',4],['0415032','Czernikowo',4],['0415072','Obrowo',6],['0415042','Lubicz',8],
        ['0415022','Chełmża',1],['0415011','Chełmża',8],['0415052','Łubianka',10],['0415062','Łysomice',9],
        ['0415092','Zławieś Wielka',3],['0401','aleksandrowski',7],['0402','brodnicki',8],['0403','bydgoski',7],
        ['0461','Bydgoszcz',3],['0404','chełmiński',5],['0405','golubsko-dobrzyński',5],['0406','grudziądzki',6],
        ['0462','Grudziądz',10],['0407','inowrocławski',7],['0408','lipnowski',8],['0409','mogileński',5],
        ['0410','nakielski',5],['0411','radziejowski',9],['0412','rypiński',5],['0413','sępoleński',5],
        ['0414','świecki',2],['0463','Toruń',6],['0416','tucholski',9],['0417','wąbrzeski',2],
        ['0418','włocławski',4],['0464','Włocławek',9],['0419','żniński',8],['02','dolnośląskie',2]
    ];
    const ranges = [[10,9],[9,5],[5,3],[3,'-0,1']];
    const letters = ['A','B','C','D','E','F','G','H','I','J','K','L','M','N','O','P','Q','R','S','T','U','V','W',''];
    const widths = ['w-[56px]','w-[169px]','w-[39px]'];
    const cell = 'relative h-[20px] shrink-0 overflow-hidden whitespace-nowrap border-b border-r border-[#d8d8d8] px-[2px] leading-[19px]';
    const head = 'h-[20px] shrink-0 border-b border-r border-[#b6bbc3] bg-[#dfe3e8] text-center leading-[19px] text-[#444]';
    const headSel = 'h-[20px] shrink-0 border-b border-r border-[#d99a2e] bg-[linear-gradient(180deg,#fbe48e,#fad45c)] text-center leading-[19px] text-[#444]';
    const tick = '<i class="absolute left-0 top-0 border-r-[5px] border-t-[5px] border-r-transparent border-t-[#1e8a2e]"></i>';
    const filter = '<i class="absolute bottom-0 right-0 flex h-[19px] w-[17px] items-center justify-center border border-[#a9aeb6] bg-[linear-gradient(180deg,#fbfbfc,#e3e5e9)]"><b class="border-x-[4px] border-t-[4px] border-x-transparent border-t-[#555]"></b></i>';

    const w = i => widths[i] || (i === 23 ? 'w-[10px]' : 'w-[64px]');
    let html = '<div class="flex"><div class="' + head + ' w-[26px]"><i class="mt-[4px] ml-[8px] inline-block border-b-[12px] border-l-[12px] border-b-[#b9bec6] border-l-transparent"></i></div>';
    letters.forEach((l, i) => { html += '<div class="' + (l === 'H' ? headSel : head) + ' ' + w(i) + '">' + l + '</div>'; });
    html += '</div>';

    for (let r = 1; r <= 33; r++) {
        const row = data[r - 2];
        html += '<div class="flex"><div class="' + (r === 2 ? headSel : head) + ' w-[26px]">' + r + '</div>';
        letters.forEach((l, i) => {
            let inner = '';
            let align = '';
            if (r === 1) {
                if (i === 0) { inner = '<b>TERYT</b>' + filter; align = 'tracking-[-1.2px]'; }
                if (i === 1) inner = '<b>Nazwa</b>' + filter;
                if (i === 2) inner = '<b>Dane</b>';
                if (i === 4) inner = '<b>OD</b>';
                if (i === 5) inner = '<b>DO</b>';
            } else {
                // Calibri digits are narrower than Lato's
                if (i === 0) { inner = tick + row[0]; align = 'tracking-[-1.2px]'; }
                if (i === 1) inner = row[1];
                if (i === 2) { inner = row[2]; align = 'text-right'; }
                if ((i === 4 || i === 5) && ranges[r - 2]) { inner = ranges[r - 2][i - 4]; align = 'text-center'; }
            }
            html += '<div class="' + cell + ' ' + w(i) + ' ' + align + '">' + inner + '</div>';
        });
        html += '</div>';
    }
    document.getElementById('cells').innerHTML = html;
</script>
</body>
</html>
